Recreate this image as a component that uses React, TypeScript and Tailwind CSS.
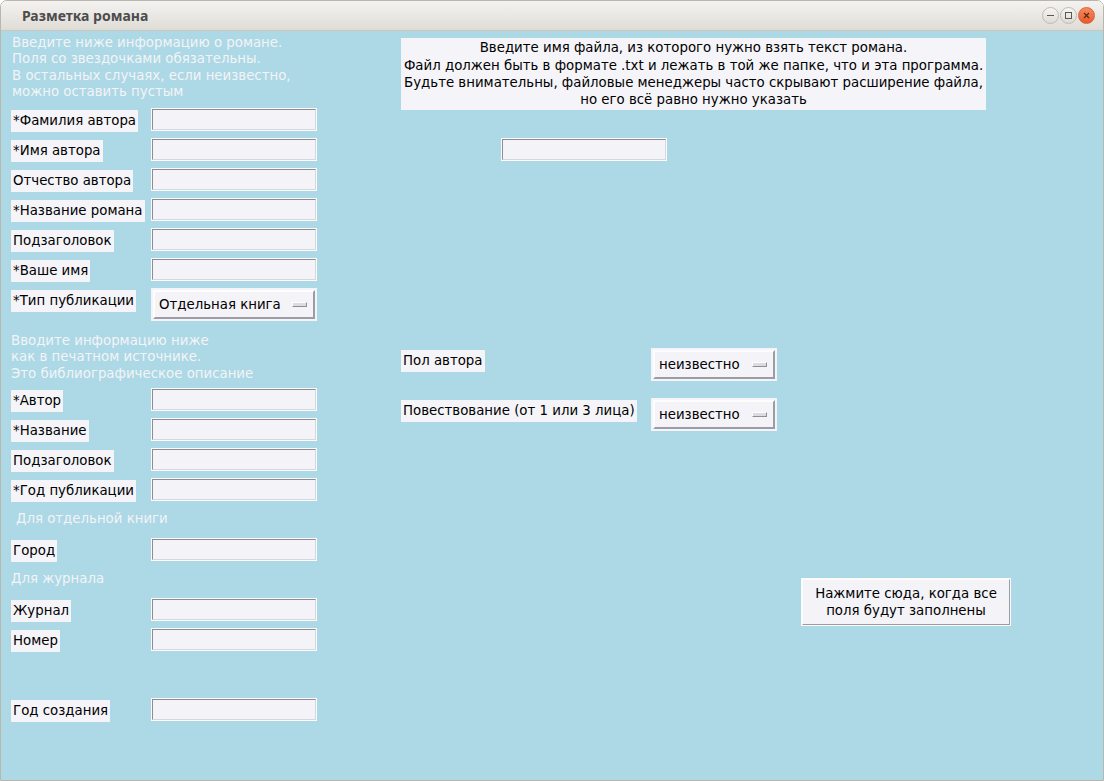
import React from "react";

const FONT = { fontFamily: '"DejaVu Sans", "Noto Sans", sans-serif' };

function Label({ text }: { text: string }) {
  return (
    <span className="inline-block h-[22px] bg-[#f5f4f9] px-[2px] text-[13.33px] leading-[21px] text-black whitespace-nowrap">
      {text}
    </span>
  );
}

function Entry() {
  return (
    <div className="h-[23px] w-[166px] border border-[#fbfbfd] bg-[#f4f3f8]">
      <div className="h-full w-full border-l border-t border-[#8d8b93] border-r-[#d8d7dd] border-b-[#d8d7dd] border-r border-b" />
    </div>
  );
}

function Option({ text, wide }: { text: string; wide?: boolean }) {
  return (
    <div
      className={
        (wide ? "w-[166px]" : "w-[126px]") +
        " h-[33px] border-2 border-[#f5f4fa] bg-[#f5f4fa]"
      }
    >
      <div className="flex h-full w-full items-center justify-between border-2 border-t-[#fdfdfe] border-l-[#fdfdfe] border-r-[#9d9ca3] border-b-[#9d9ca3] bg-[#f4f3f8] pl-[4px] pr-[6px]">
        <span className="text-[13.33px] leading-none text-black whitespace-nowrap">{text}</span>
        <span className="block h-[5px] w-[15px] border border-t-[#fdfdfe] border-l-[#fdfdfe] border-r-[#8f8e96] border-b-[#8f8e96] bg-[#dcdbe2]" />
      </div>
    </div>
  );
}

function Row({ label, children, h = 30 }: { label: string; children?: React.ReactNode; h?: number }) {
  return (
    <div className={(h === 33 ? "h-[33px]" : "h-[30px]") + " flex items-start"}>
      <div className="w-[140px]">
        <Label text={label} />
      </div>
      {children ?? <Entry />}
    </div>
  );
}

export default function App() {
  return (
    <div className="w-[1104px] h-[781px] bg-white" style={FONT}>
      <div className="flex h-[781px] w-[1104px] flex-col overflow-hidden rounded-t-[7px] border border-[#b9b6ae]">
        {/* Title bar */}
        <div className="flex h-[29px] shrink-0 items-center justify-between bg-gradient-to-b from-[#f4f3f1] to-[#dfdcd6] pl-[21px] pr-[8px]">
          <span className="text-[14px] font-bold text-[#4c4c4c]" style={{ fontFamily: '"Noto Sans", "DejaVu Sans", sans-serif' }}>
            Разметка романа
          </span>
          <div className="flex items-center gap-[1px]">
            <div className="flex h-[17px] w-[17px] items-center justify-center rounded-full border border-[#bebbb4] bg-gradient-to-b from-[#f6f5f3] to-[#dedbd5]">
              <div className="h-[1px] w-[7px] bg-[#5a5853]" />
            </div>
            <div className="flex h-[17px] w-[17px] items-center justify-center rounded-full border border-[#bebbb4] bg-gradient-to-b from-[#f6f5f3] to-[#dedbd5]">
              <div className="h-[7px] w-[7px] border border-[#5a5853]" />
            </div>
            <div className="flex h-[17px] w-[17px] items-center justify-center rounded-full border border-[#d9623a] bg-gradient-to-b from-[#f58a5c] to-[#e9592a]">
              <svg width="7" height="7" viewBox="0 0 7 7">
                <path d="M1 1 L6 6 M6 1 L1 6" stroke="#5b2a16" strokeWidth="1.3" />
              </svg>
            </div>
          </div>
        </div>

        {/* Content */}
        <div className="flex flex-1 border-t border-[#c9c6bf] bg-[#add8e6]">
          {/* Left column */}
          <div className="flex w-[400px] shrink-0 flex-col pl-[10px]">
            <div className="mt-[4px] h-[66px] pl-[1px] text-[13.33px] leading-[16.4px] text-[#f3f4f6]">
              Введите ниже информацию о романе.
              <br />
              Поля со звездочками обязательны.
              <br />
              В остальных случаях, если неизвестно,
              <br />
              можно оставить пустым
            </div>
            <div className="mt-[7px]">
              <Row label="*Фамилия автора" />
              <Row label="*Имя автора" />
              <Row label="Отчество автора" />
              <Row label="*Название романа" />
              <Row label="Подзаголовок" />
              <Row label="*Ваше имя" />
              <Row label="*Тип публикации" h={33}>
                <Option text="Отдельная книга" wide />
              </Row>
            </div>
            <div className="mt-[12px] h-[49px] text-[13.33px] leading-[16.4px] text-[#f3f4f6]">
              Вводите информацию ниже
              <br />
              как в печатном источнике.
              <br />
              Это библиографическое описание
            </div>
            <div className="mt-[6px]">
              <Row label="*Автор" />
              <Row label="*Название" />
              <Row label="Подзаголовок" />
              <Row label="*Год публикации" />
            </div>
            <div className="mt-[3px] h-[16px] pl-[5px] text-[13.33px] leading-[16px] text-[#f3f4f6]">
              Для отдельной книги
            </div>
            <div className="mt-[11px]">
              <Row label="Город" />
            </div>
            <div className="mt-[3px] h-[16px] text-[13.33px] leading-[16px] text-[#f3f4f6]">
              Для журнала
            </div>
            <div className="mt-[11px]">
              <Row label="Журнал" />
              <Row label="Номер" />
            </div>
            <div className="mt-[40px]">
              <Row label="Год создания" />
            </div>
          </div>

          {/* Right column */}
          <div className="flex flex-1 flex-col">
            <div className="mt-[7px] flex h-[72px] w-[585px] items-center justify-center bg-[#f5f4f9] text-center text-[13.33px] leading-[17.3px] text-black">
              <div>
                Введите имя файла, из которого нужно взять текст романа.
                <br />
                Файл должен быть в формате .txt и лежать в той же папке, что и эта программа.
                <br />
                Будьте внимательны, файловые менеджеры часто скрывают расширение файла,
                <br />
                но его всё равно нужно указать
              </div>
            </div>
            <div className="ml-[100px] mt-[28px]">
              <Entry />
            </div>
            <div className="mt-[187px] flex h-[33px] items-start">
              <div className="w-[250px]">
                <Label text="Пол автора" />
              </div>
              <Option text="неизвестно" />
            </div>
            <div className="mt-[17px] flex h-[33px] items-start">
              <div className="w-[250px]">
                <Label text="Повествование (от 1 или 3 лица)" />
              </div>
              <Option text="неизвестно" />
            </div>
            <div className="ml-[400px] mt-[147px] h-[48px] w-[210px] border border-[#fbfbfd] bg-[#f4f3f8]">
              <div className="flex h-full w-full items-center justify-center border border-t-[#fdfdfe] border-l-[#fdfdfe] border-r-[#9d9ca3] border-b-[#9d9ca3] text-center text-[13.33px] leading-[17px] text-black">
                <div>
                  Нажмите сюда, когда все
                  <br />
                  поля будут заполнены
                </div>
              </div>
            </div>
          </div>
        </div>
      </div>
    </div>
  );
}
